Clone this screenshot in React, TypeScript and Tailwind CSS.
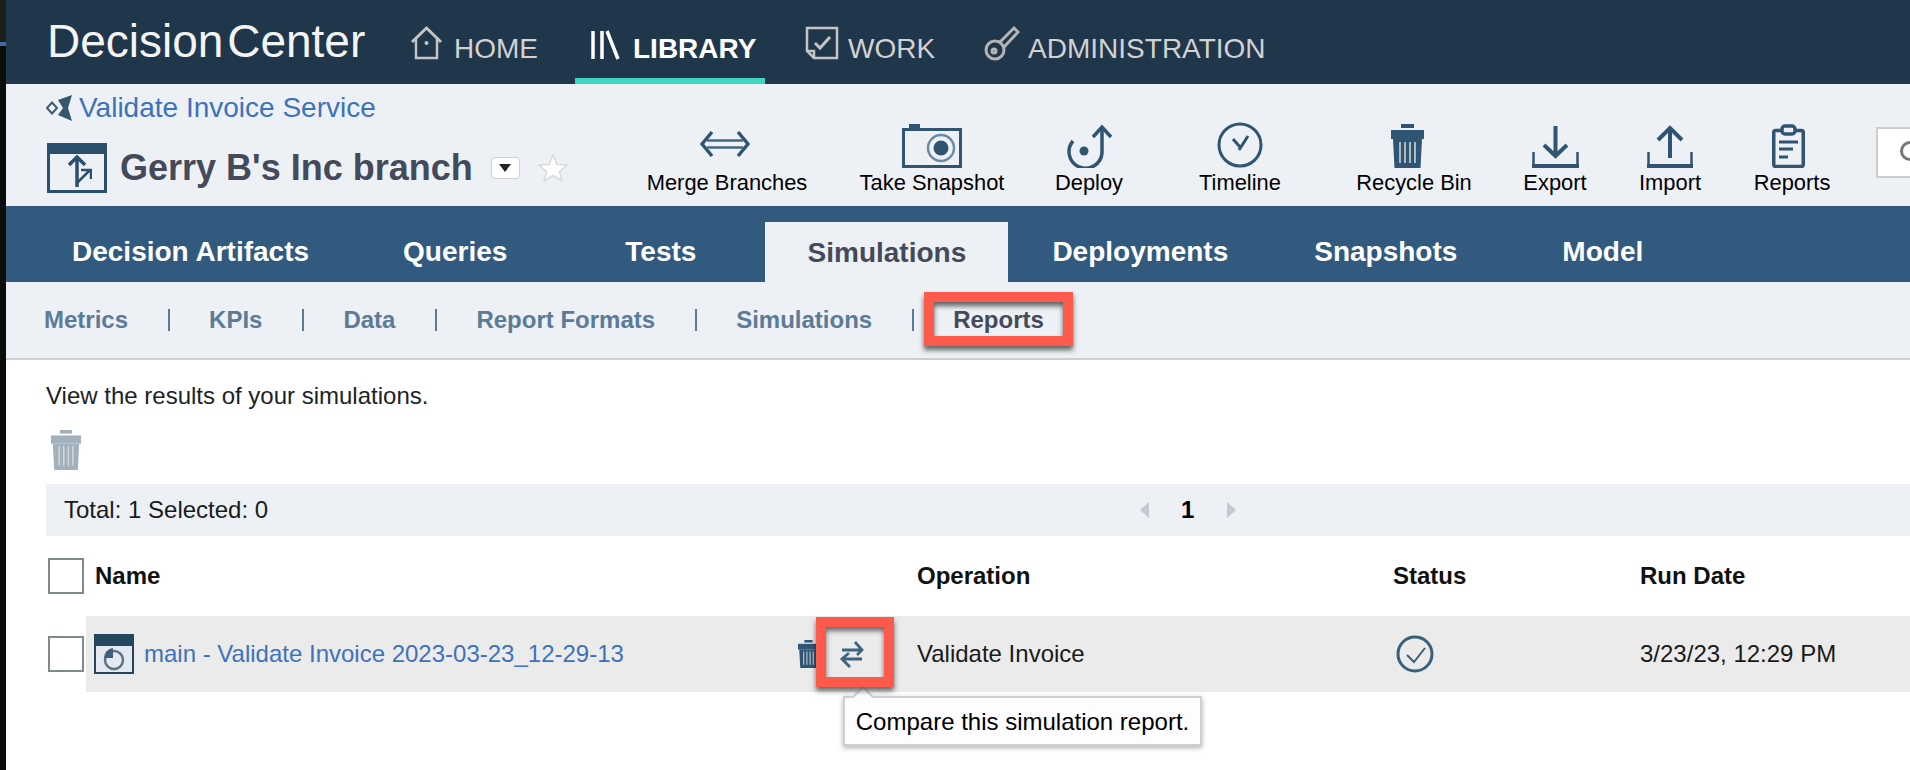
import React from "react";

const ICON = "#2f5573";

function House() {
  return (
    <svg width="33" height="36" viewBox="0 0 33 36" fill="none" stroke="#c4c4c4" strokeWidth="2.500">
      <path d="M2 17 L16.500 3 L31 17" strokeWidth="3" />
      <path d="M6 14 V33 H27 V14" />
      <circle cx="16.500" cy="18" r="2" fill="#c4c4c4" stroke="none" />
    </svg>
  );
}
function Library() {
  return (
    <svg width="30" height="30" viewBox="0 0 30 30" fill="none" stroke="#ffffff" strokeWidth="3.500">
      <path d="M3 1 V29 M12 1 V29 M17 1 L28 29" />
    </svg>
  );
}
function Work() {
  return (
    <svg width="34" height="34" viewBox="0 0 34 34" fill="none" stroke="#c4c4c4" strokeWidth="2.500">
      <path d="M2 2 H32 V32 H9 L2 25 Z" />
      <path d="M2 25 H9 V32" />
      <path d="M10 17 L15 22 L25 11" strokeWidth="3" />
    </svg>
  );
}
function Key() {
  return (
    <svg width="36" height="36" viewBox="0 0 36 36" fill="none" stroke="#b4b4b4" strokeWidth="3">
      <circle cx="11" cy="25" r="9" />
      <circle cx="10" cy="26" r="2" />
      <path d="M16 17 L30 3 L34 7 L20 22" />
    </svg>
  );
}
function Merge() {
  return (
    <svg className="mb-[10px] mr-[4px]" width="50" height="28" viewBox="0 0 50 28" fill="none" stroke={ICON} strokeWidth="3.500">
      <path d="M12 2 L2 14 L12 26 M38 2 L48 14 L38 26" />
      <path d="M7 10.500 H43 M7 17.500 H43" strokeWidth="2.500" stroke="#44687f" />
    </svg>
  );
}
function Camera() {
  return (
    <svg width="60" height="44" viewBox="0 0 60 44" fill="none">
      <rect x="7" y="0" width="11" height="5" fill={ICON} />
      <rect x="1.500" y="5.500" width="57" height="37" stroke={ICON} strokeWidth="3" />
      <circle cx="39" cy="24" r="13" stroke="#6d8ba3" strokeWidth="2.500" />
      <circle cx="39" cy="24" r="7.500" fill={ICON} />
    </svg>
  );
}
function Deploy() {
  return (
    <svg width="47" height="44" viewBox="0 0 47 44" fill="none" stroke={ICON} strokeWidth="3.500">
      <path d="M7 17 A16.500 16.500 0 1 0 36 29 V3" />
      <path d="M27 13 L36 3 L45 13" />
      <circle cx="18" cy="27" r="4.500" fill={ICON} stroke="none" />
    </svg>
  );
}
function Clock() {
  return (
    <svg width="46" height="46" viewBox="0 0 46 46" fill="none" stroke={ICON} strokeWidth="3">
      <circle cx="23" cy="23" r="21" />
      <path d="M16 17 L23 25 M31 14 L22 28" strokeWidth="3" />
    </svg>
  );
}
function Trash({ color = ICON, w = 33, h = 44, className = "" }: { color?: string; w?: number; h?: number; className?: string }) {
  return (
    <svg className={className} width={w} height={h} viewBox="0 0 33 44" fill="none">
      <rect x="10" y="0" width="13" height="4" fill={color} />
      <rect x="0" y="6" width="33" height="9" fill={color} />
      <path d="M2 15 H31 L29.500 44 H3.500 Z" fill={color} />
      <path d="M9 18 V39 M14 18 V39 M19 18 V39 M24 18 V39" stroke="#d3dce3" strokeWidth="1.500" />
    </svg>
  );
}
function Export() {
  return (
    <svg width="47" height="43" viewBox="0 0 47 43" fill="none" stroke={ICON} strokeWidth="4">
      <path d="M23.500 1 V31 M12 20 L23.500 31 L35 20" />
      <path d="M1.500 27 V41" strokeWidth="2.500" />
      <path d="M45.500 27 V41" strokeWidth="2.500" />
      <path d="M0 41 H47" />
    </svg>
  );
}
function Import() {
  return (
    <svg width="46" height="43" viewBox="0 0 46 43" fill="none" stroke={ICON} strokeWidth="4">
      <path d="M23 33 V4 M11 15 L23 3 L35 15" />
      <path d="M1.500 27 V41" strokeWidth="2.500" />
      <path d="M44.500 27 V41" strokeWidth="2.500" />
      <path d="M0 41 H46" />
    </svg>
  );
}
function Clipboard() {
  return (
    <svg className="mr-[7px]" width="33" height="44" viewBox="0 0 33 44" fill="none" stroke={ICON} strokeWidth="3.500">
      <rect x="1.750" y="6.500" width="29.500" height="36" rx="2" />
      <rect x="10" y="2" width="13" height="8" rx="3" fill="#edf1f5" />
      <path d="M7 18 H26 M7 25 H21 M7 33 H16" strokeWidth="3" />
    </svg>
  );
}
function Crumb() {
  return (
    <svg width="27" height="26" viewBox="0 0 27 26" fill="none">
      <path d="M1 13 L6 7.500 L11 13 L6 18.500 Z" stroke="#3d5c75" strokeWidth="2" />
      <path d="M12 5 L26 0 L22 13 L26 26 L12 20 L17 13 Z" fill="#34566f" />
    </svg>
  );
}
function BranchIcon() {
  return (
    <div className="w-[60px] h-[50px] border-[3px] border-[#2a506e] flex flex-col shrink-0">
      <div className="h-[8px] bg-[#2a506e]" />
      <div className="flex-1 flex items-center justify-center">
        <svg width="30" height="36" viewBox="0 0 30 36" fill="none" stroke="#2a506e" strokeWidth="3.500">
          <path d="M15 33 V3 M7 11 L15 3 L23 11" />
          <path d="M15 29 L28 16 M19 16 H29 V25" strokeWidth="2.500" />
        </svg>
      </div>
    </div>
  );
}
function FileIcon() {
  return (
    <div className="w-[40px] h-[40px] border-2 border-[#23475f] bg-[#e3e9ee] flex flex-col shrink-0">
      <div className="h-[10px] bg-[#23475f]" />
      <div className="flex-1 flex items-center justify-center">
        <svg width="24" height="24" viewBox="0 0 24 24" fill="none" stroke="#5a7488" strokeWidth="2.500">
          <circle cx="12" cy="13" r="9" />
          <path d="M11 1 V11 H2 A10 10 0 0 1 11 1 Z" fill="#3f5f77" stroke="none" />
        </svg>
      </div>
    </div>
  );
}
function Swap() {
  return (
    <svg width="24" height="28" viewBox="0 0 24 28" fill="none" stroke="#3f6480" strokeWidth="2.800">
      <path d="M2 10 H22 M15 2 L22 10 L17 15" />
      <path d="M22 19 H2 M9 13 L2 19 L10 27" />
    </svg>
  );
}
function Check() {
  return (
    <svg width="38" height="38" viewBox="0 0 38 38" fill="none" stroke="#3a6079">
      <circle cx="19" cy="19" r="17" strokeWidth="3" />
      <path d="M11 20 L18 27 L29 13" strokeWidth="2" />
    </svg>
  );
}

const actions: { label: string; w: string; icon: React.ReactNode }[] = [
  { label: "Merge Branches", w: "w-[214px]", icon: <Merge /> },
  { label: "Take Snapshot", w: "w-[196px]", icon: <Camera /> },
  { label: "Deploy", w: "w-[118px]", icon: <Deploy /> },
  { label: "Timeline", w: "w-[184px]", icon: <Clock /> },
  { label: "Recycle Bin", w: "w-[164px]", icon: <Trash className="mr-[14px]" /> },
  { label: "Export", w: "w-[118px]", icon: <Export /> },
  { label: "Import", w: "w-[112px]", icon: <Import /> },
  { label: "Reports", w: "w-[132px]", icon: <Clipboard /> },
];

function Sep() {
  return <span className="w-[2px] h-[22px] bg-[#5b7b98] shrink-0" />;
}

export default function App() {
  return (
    <div
      className="w-[1910px] h-[770px] overflow-hidden flex bg-white text-[#1a1a1a]"
      style={{ fontFamily: '"Liberation Sans", Arial, sans-serif' }}
    >
      <div className="w-[6px] shrink-0 bg-[#0c0c0c] flex flex-col">
        <div className="h-[42px] bg-[#1c1c1c]" />
        <div className="h-[4px] bg-[#3a6ea5]" />
      </div>
      <div className="flex-1 flex flex-col min-w-0">
        <header className="h-[84px] bg-[#20364b] flex items-stretch shrink-0">
          <div
            className="ml-[41px] w-[322px] pt-[13px] text-[46px] leading-[56px] text-[#f4f4f4] whitespace-nowrap"
            style={{ wordSpacing: "-9px" }}
          >
            Decision Center
          </div>
          <div className="ml-[41px] flex items-center gap-[11px] text-[#d2d2d2] text-[28px] pt-[13px]">
            <span className="-mt-[12px]"><House /></span>
            <span>HOME</span>
          </div>
          <div className="ml-[37px] w-[190px] relative flex items-center pl-[15px] gap-[13px] text-white text-[28px] font-bold pt-[13px]">
            <span className="-mt-[8px]"><Library /></span>
            <span>LIBRARY</span>
            <span className="absolute left-0 right-0 bottom-0 h-[6px] bg-[#3dd6c2]" />
          </div>
          <div className="ml-[40px] flex items-center gap-[9px] text-[#d2d2d2] text-[28px] pt-[13px]">
            <span className="-mt-[12px]"><Work /></span>
            <span>WORK</span>
          </div>
          <div className="ml-[49px] flex items-center gap-[8px] text-[#d2d2d2] text-[28px] pt-[13px]">
            <span className="-mt-[12px]"><Key /></span>
            <span>ADMINISTRATION</span>
          </div>
        </header>

        <section className="h-[122px] bg-[#edf1f5] flex shrink-0">
          <div className="w-[614px] shrink-0 pl-[40px] pt-[10px]">
            <div className="flex items-center gap-[6px] h-[28px]">
              <Crumb />
              <a className="text-[#3d72bb] text-[28px] leading-[28px] whitespace-nowrap">Validate Invoice Service</a>
            </div>
            <div className="mt-[21px] flex items-center">
              <span className="ml-[1px]"><BranchIcon /></span>
              <span className="ml-[13px] text-[36px] leading-[50px] font-bold text-[#454a5b] whitespace-nowrap">
                Gerry B's Inc branch
              </span>
              <span className="ml-[18px] w-[29px] h-[22px] rounded-[4px] bg-white border border-[#d0d0d0] flex items-center justify-center">
                <span className="w-0 h-0 border-l-[6px] border-r-[6px] border-t-[8px] border-l-transparent border-r-transparent border-t-[#222]" />
              </span>
              <svg className="ml-[18px]" width="30" height="28" viewBox="0 0 30 28" fill="#ffffff" stroke="#d9d9d9" strokeWidth="1.500">
                <path d="M15 1 L19 10.500 L29 11 L21.500 17.500 L24 27 L15 21.500 L6 27 L8.500 17.500 L1 11 L11 10.500 Z" />
              </svg>
            </div>
          </div>
          {actions.map((a) => (
            <div key={a.label} className={`${a.w} shrink-0 pt-[38px] flex flex-col items-center`}>
              <div className="h-[46px] flex items-end justify-center">{a.icon}</div>
              <div className="mt-[2px] text-[21.900px] leading-[26px] text-black whitespace-nowrap">{a.label}</div>
            </div>
          ))}
          <div className="ml-[18px] mt-[43px] w-[60px] h-[51px] shrink-0 bg-white border-2 border-[#cccccc] pl-[22px] pt-[12px]">
            <span className="block w-[20px] h-[20px] rounded-full border-[3px] border-[#777]" />
          </div>
        </section>

        <nav className="h-[76px] bg-[#325a7e] flex items-end shrink-0 text-[28px] font-bold text-white">
          <span className="ml-[66px] h-[60px] leading-[60px]">Decision Artifacts</span>
          <span className="ml-[94px] h-[60px] leading-[60px]">Queries</span>
          <span className="ml-[118px] h-[60px] leading-[60px]">Tests</span>
          <span className="ml-[69px] w-[243px] h-[60px] leading-[62px] text-center bg-[#edf1f5] text-[#454a5b]">Simulations</span>
          <span className="ml-[44px] h-[60px] leading-[60px]">Deployments</span>
          <span className="ml-[86px] h-[60px] leading-[60px]">Snapshots</span>
          <span className="ml-[105px] h-[60px] leading-[60px]">Model</span>
        </nav>

        <div className="h-[78px] bg-[#edf1f5] border-b-2 border-[#c9d0d4] flex items-center pl-[38px] gap-[39.500px] text-[24px] font-bold text-[#5b7b98] shrink-0">
          <span>Metrics</span>
          <Sep />
          <span>KPIs</span>
          <Sep />
          <span>Data</span>
          <Sep />
          <span>Report Formats</span>
          <Sep />
          <span>Simulations</span>
          <Sep />
          <span className="relative text-[#454a5b]">
            Reports
            <span className="absolute -left-[29px] -right-[29px] -top-[10px] -bottom-[8px] border-[10px] border-[#fd5a4c] shadow-[0_4px_5px_rgba(0,0,0,0.6),inset_0_4px_5px_rgba(0,0,0,0.6)]" />
          </span>
        </div>

        <main className="flex-1 pt-[20px] text-[24px]">
          <p className="ml-[40px] leading-[32px] text-[#1c2328]">View the results of your simulations.</p>
          <div className="ml-[43px] mt-[18px] h-[40px]">
            <Trash color="#a3b1bc" w={34} h={40} />
          </div>
          <div className="ml-[40px] mt-[14px] h-[52px] bg-[#edf1f5] flex items-center pl-[18px]">
            <span className="w-[204px] whitespace-nowrap">Total: 1 Selected: 0</span>
            <span className="ml-[872px] w-0 h-0 border-y-[8px] border-r-[9px] border-y-transparent border-r-[#c3c9ce]" />
            <span className="ml-[32px] font-bold text-black">1</span>
            <span className="ml-[33px] w-0 h-0 border-y-[8px] border-l-[9px] border-y-transparent border-l-[#c3c9ce]" />
          </div>
          <div className="mt-[22px] h-[36px] flex items-center font-bold text-[#111]">
            <span className="ml-[42px] w-[36px] h-[36px] border-2 border-[#7f8a8a] bg-white shrink-0" />
            <span className="ml-[11px] w-[822px]">Name</span>
            <span className="w-[476px]">Operation</span>
            <span className="w-[247px]">Status</span>
            <span>Run Date</span>
          </div>
          <div className="mt-[22px] flex items-center">
            <span className="ml-[42px] w-[36px] h-[36px] border-2 border-[#7f8a8a] bg-white shrink-0" />
            <div className="ml-[2px] flex-1 h-[76px] bg-[#ebebeb] flex items-center relative">
              <span className="ml-[8px]"><FileIcon /></span>
              <a className="ml-[10px] w-[653px] text-[#3d72bb] whitespace-nowrap">main - Validate Invoice 2023-03-23_12-29-13</a>
              <span className="w-[43px]"><Trash w={23} h={28} /></span>
              <span className="relative w-[77px]">
                <Swap />
                <span className="absolute z-10 -left-[24px] -top-[23px] w-[78px] h-[70px] border-[10px] border-[#fd5a4c] shadow-[0_4px_5px_rgba(0,0,0,0.55),inset_0_4px_5px_rgba(0,0,0,0.55)]" />
              </span>
              <span className="w-[479px] whitespace-nowrap">Validate Invoice</span>
              <span className="w-[244px]"><Check /></span>
              <span className="whitespace-nowrap text-[#1a1a1a]">3/23/23, 12:29 PM</span>
              <div className="absolute left-[757px] top-[80px] w-[359px] h-[50px] pt-[2px] bg-[#fdfdff] border-2 border-[#cfcfcf] shadow-[0_2px_5px_rgba(0,0,0,0.3)] flex items-center justify-center text-black whitespace-nowrap">
                <span className="absolute left-[10px] -top-[9px] w-[16px] h-[16px] rotate-45 bg-[#fdfdff] border-t-2 border-l-2 border-[#cfcfcf]" />
                Compare this simulation report.
              </div>
            </div>
          </div>
        </main>
      </div>
    </div>
  );
}
